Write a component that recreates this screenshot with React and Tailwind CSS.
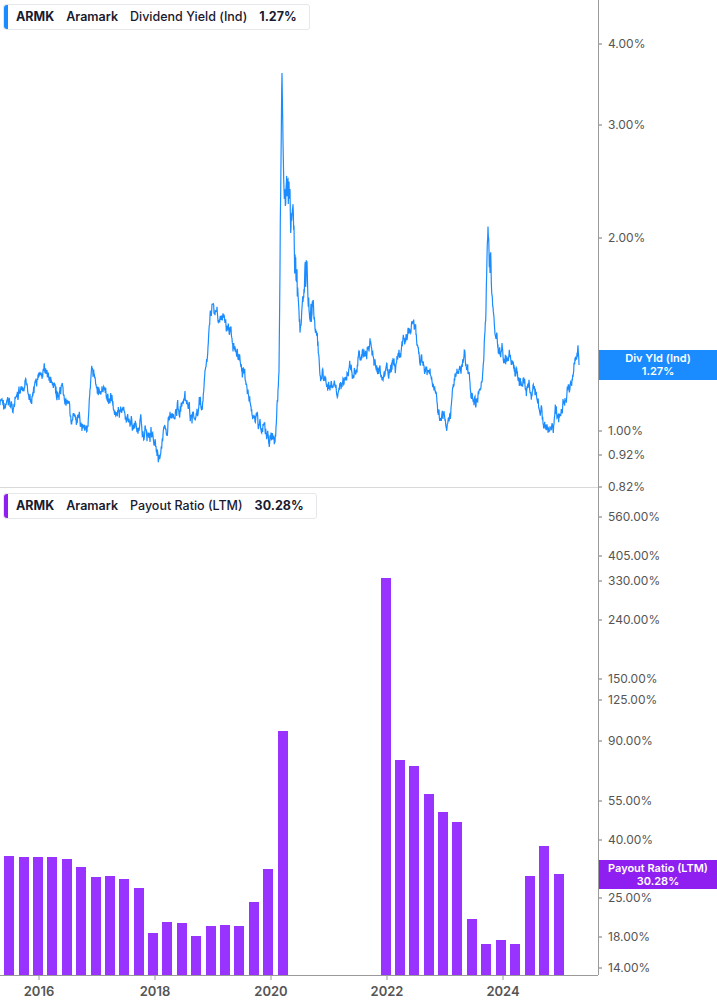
import React from 'react';

const keys = [[0,405],[10,408],[20,398],[32,392],[45,370],[55,392],[65,405],[78,428],[88,420],[92,375],[100,390],[110,400],[120,410],[130,425],[145,430],[155,440],[160,452],[168,420],[175,405],[185,410],[195,420],[203,400],[212,305],[225,325],[235,340],[245,380],[255,420],[265,432],[275,442],[279,380],[282,90],[285,200],[290,230],[295,260],[300,330],[305,270],[312,290],[320,370],[330,390],[340,388],[350,375],[360,360],[370,345],[378,372],[385,380],[395,365],[405,345],[412,320],[420,360],[430,375],[440,405],[447,432],[455,380],[465,360],[470,390],[478,405],[483,360],[488,268],[495,330],[505,360],[515,378],[525,385],[535,392],[542,420],[548,435],[556,420],[563,400],[570,385],[575,360],[578,345],[579,365]];

function series() {
  let s = 7;
  const rnd = () => { s = (s * 9301 + 49297) % 233280; return s / 233280; };
  const pts = [];
  let walk = 0;
  for (let i = 0; i < keys.length - 1; i++) {
    const [x0, y0] = keys[i], [x1, y1] = keys[i + 1];
    const n = Math.max(2, Math.round((x1 - x0) * 3));
    for (let j = 0; j < n; j++) {
      const t = j / n;
      const y = y0 + (y1 - y0) * t;
      const amp = y < 300 ? 3 : 1.6;
      walk = walk * 0.85 + (rnd() - 0.5) * amp * 4;
      pts.push([x0 + (x1 - x0) * t, y + walk * amp + (rnd() - 0.5) * amp * 3]);
    }
  }
  pts.push(keys[keys.length - 1]);
  return pts.map(p => p[0].toFixed(1) + ',' + p[1].toFixed(1)).join(' ');
}

const bars = [[9,856],[24,857],[38,857],[52,857],[67,859],[81,867],[96,877],[110,876],[124,879],[139,888],[153,933],[167,922],[182,923],[196,936],[211,926],[225,925],[239,926],[254,902],[268,869],[283,731],[386,578],[400,760],[414,766],[429,794],[443,812],[457,822],[472,919],[486,944],[501,940],[515,944],[530,876],[544,846],[559,874]];

const ticks = [['4.00%',44],['3.00%',125],['2.00%',238],['1.00%',431],['0.92%',455],['0.82%',487],['560.00%',517],['405.00%',556],['330.00%',581],['240.00%',620],['150.00%',679],['125.00%',700],['90.00%',741],['55.00%',801],['40.00%',840],['25.00%',898],['18.00%',937],['14.00%',968]];
const years = [['2016',39],['2018',155],['2020',271],['2022',387],['2024',503]];

function Legend({ color, name, value, top }) {
  return (
    <div className="absolute left-[3px] flex items-center h-[26px] bg-white border border-gray-200 rounded-[3px] text-[12.5px] text-[#1a1a2e] pr-3" style={{ top }}>
      <div className="w-[4px] h-full rounded-l-[3px]" style={{ background: color }} />
      <span className="font-bold ml-2">ARMK</span>
      <span className="font-semibold ml-3">Aramark</span>
      <span className="font-medium ml-3">{name}</span>
      <span className="font-bold ml-3">{value}</span>
    </div>
  );
}

export default function App() {
  return (
    <div className="relative w-[717px] h-[1005px] bg-white overflow-hidden" style={{ fontFamily: 'Inter, "Liberation Sans", sans-serif' }}>
      <svg className="absolute left-0 top-0" width="717" height="1005">
        <line x1="0" y1="487.5" x2="598" y2="487.5" stroke="#d9d9d9" />
        <line x1="598.5" y1="0" x2="598.5" y2="975" stroke="#9a9a9a" />
        <line x1="0" y1="975.5" x2="598" y2="975.5" stroke="#9a9a9a" />
        <polyline points={series()} fill="none" stroke="#1a8cff" strokeWidth="1.2" />
        {bars.map(([x, t]) => (
          <rect key={x} x={x - 5} y={t} width="10" height={975 - t} fill="#9933ff" />
        ))}
        {ticks.map(([l, y]) => <line key={l} x1="599" y1={y} x2="602" y2={y} stroke="#777" />)}
        {years.map(([l, x]) => <line key={l} x1={x} y1="976" x2={x} y2="980" stroke="#999" />)}
      </svg>
      <Legend color="#1a8cff" name="Dividend Yield (Ind)" value="1.27%" top={4} />
      <Legend color="#8f1ff0" name="Payout Ratio (LTM)" value="30.28%" top={493} />
      {ticks.map(([l, y]) => (
        <div key={l} className="absolute left-[608px] text-[12px] text-[#555] leading-none" style={{ top: y - 6 }}>{l}</div>
      ))}
      {years.map(([l, x]) => (
        <div key={l} className="absolute text-[13px] font-semibold text-[#555] w-[40px] text-center leading-none" style={{ left: x - 20, top: 985 }}>{l}</div>
      ))}
      <div className="absolute left-[599px] top-[350px] w-[118px] h-[30px] bg-[#1a8cff] text-white text-[11px] font-semibold leading-[13px] flex flex-col items-center justify-center">
        <span>Div Yld (Ind)</span><span>1.27%</span>
      </div>
      <div className="absolute left-[599px] top-[860px] w-[118px] h-[29px] bg-[#8f1ff0] text-white text-[11px] font-semibold leading-[13px] flex flex-col items-center justify-center">
        <span>Payout Ratio (LTM)</span><span>30.28%</span>
      </div>
    </div>
  );
}
